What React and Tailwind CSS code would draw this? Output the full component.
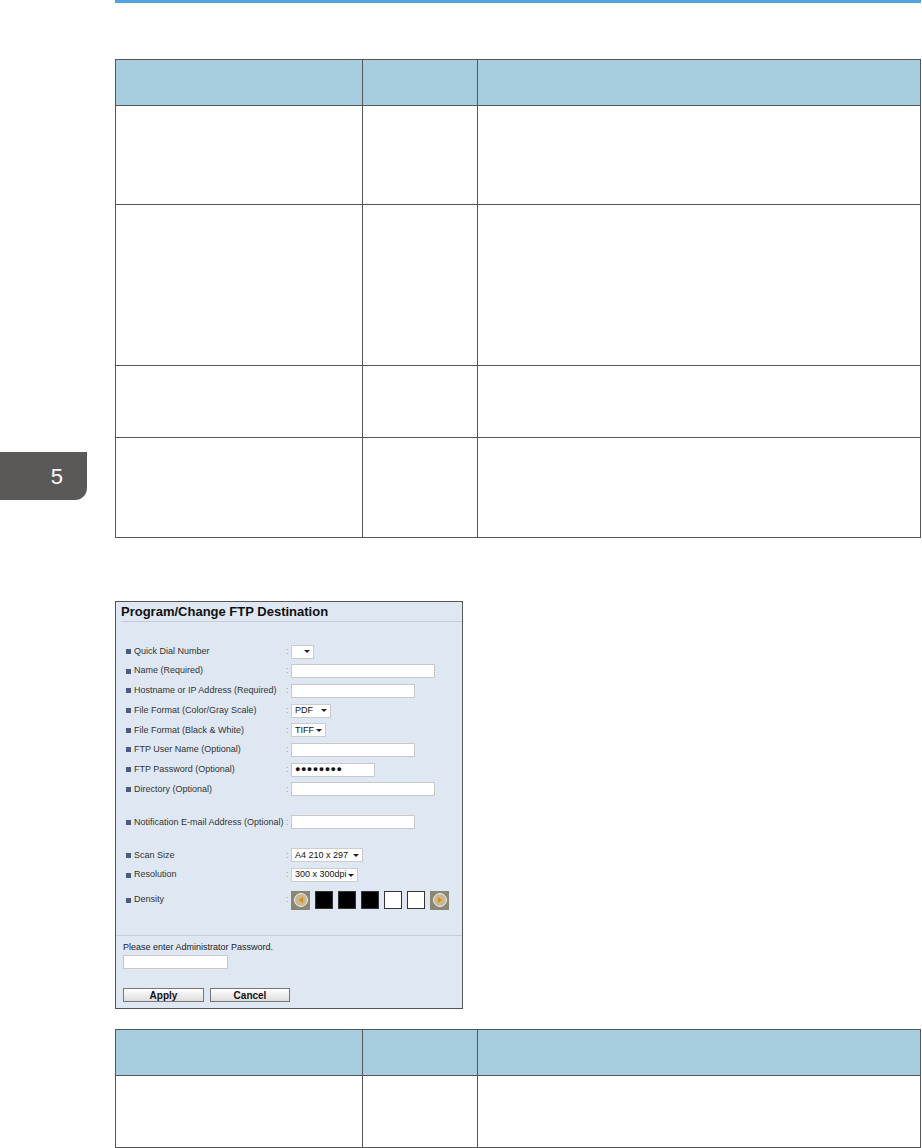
const rowsTop = [99, 161, 72, 100]

function Table({ rows }) {
  return (
    <div className="w-[806px] border border-[#555]">
      <div className="flex h-[45px] bg-[#a7cddf]">
        <div className="w-[247px] border-r border-[#555]" />
        <div className="w-[115px] border-r border-[#555]" />
        <div className="flex-1" />
      </div>
      {rows.map((h, i) => (
        <div key={i} className="flex border-t border-[#555] bg-white" style={{ height: h }}>
          <div className="w-[247px] border-r border-[#555]" />
          <div className="w-[115px] border-r border-[#555]" />
          <div className="flex-1" />
        </div>
      ))}
    </div>
  )
}

function Arrow() {
  return <span className="ml-auto mr-[3px] h-0 w-0 border-x-[3px] border-t-[3px] border-x-transparent border-t-[#222]" />
}

function Select({ w, value }) {
  return (
    <div className="flex h-[14px] items-center border border-[#ccc] bg-white pl-[3px] text-[9px] text-[#111]" style={{ width: w }}>
      {value}
      <Arrow />
    </div>
  )
}

function Input({ w, children }) {
  return (
    <div className="flex h-[14px] items-center border border-[#c8c8c8] bg-white pl-[3px]" style={{ width: w }}>
      {children}
    </div>
  )
}

function Row({ label, children, gap = 'mt-[4.7px]' }) {
  return (
    <div className={`flex h-[15px] items-center ${gap}`}>
      <div className="flex w-[160px] items-center">
        <span className="mr-[3px] h-[5px] w-[5px] bg-[#4a5a80]" />
        <span className="text-[9px] text-[#333]">{label}</span>
      </div>
      <span className="w-[5px] text-[9px] text-[#999]">:</span>
      {children}
    </div>
  )
}

function Circle({ dir }) {
  return (
    <div className="flex h-[19px] w-[19px] items-center justify-center bg-[#8a8676]">
      <div className="flex h-[14px] w-[14px] items-center justify-center rounded-full border border-[#eee] bg-[#c9b896]">
        {dir === 'l' ? (
          <span className="h-0 w-0 border-y-[3px] border-r-[4px] border-y-transparent border-r-[#d98a10]" />
        ) : (
          <span className="h-0 w-0 border-y-[3px] border-l-[4px] border-y-transparent border-l-[#d98a10]" />
        )}
      </div>
    </div>
  )
}

function Form() {
  return (
    <div className="flex h-[408px] w-[348px] flex-col border border-[#555] bg-[#dfe8f2] font-['Liberation_Sans',Arial,sans-serif]">
      <div className="ml-[5px] mt-[1px] border-b border-[#c4cdd8] pb-[1px] text-[13px] font-bold leading-[17px] text-[#111]">
        Program/Change FTP Destination
      </div>
      <div className="px-[10px] pt-[22px]">
        <Row label="Quick Dial Number" gap="">
          <Select w={23} value="" />
        </Row>
        <Row label="Name (Required)">
          <Input w={144} />
        </Row>
        <Row label="Hostname or IP Address (Required)">
          <Input w={124} />
        </Row>
        <Row label="File Format (Color/Gray Scale)">
          <Select w={40} value="PDF" />
        </Row>
        <Row label="File Format (Black & White)">
          <Select w={35} value="TIFF" />
        </Row>
        <Row label="FTP User Name (Optional)">
          <Input w={124} />
        </Row>
        <Row label="FTP Password (Optional)">
          <Input w={84}>
            <span className="text-[9px] font-bold tracking-[0.5px] text-[#111]">●●●●●●●●</span>
          </Input>
        </Row>
        <Row label="Directory (Optional)">
          <Input w={144} />
        </Row>
        <Row label="Notification E-mail Address (Optional)" gap="mt-[18px]">
          <Input w={124} />
        </Row>
        <Row label="Scan Size" gap="mt-[18px]">
          <Select w={72} value="A4 210 x 297" />
        </Row>
        <Row label="Resolution">
          <Select w={67} value="300 x 300dpi" />
        </Row>
        <div className="mt-[8px] flex h-[19px] items-center">
          <div className="flex w-[160px] items-center">
            <span className="mr-[3px] h-[5px] w-[5px] bg-[#4a5a80]" />
            <span className="text-[9px] text-[#333]">Density</span>
          </div>
          <span className="w-[5px] text-[9px] text-[#999]">:</span>
          <div className="flex items-center gap-[5px]">
            <Circle dir="l" />
            <div className="h-[18px] w-[18px] border border-[#333] bg-black" />
            <div className="h-[18px] w-[18px] border border-[#333] bg-black" />
            <div className="h-[18px] w-[18px] border border-[#333] bg-black" />
            <div className="h-[18px] w-[18px] border border-[#333] bg-white" />
            <div className="h-[18px] w-[18px] border border-[#333] bg-white" />
            <Circle dir="r" />
          </div>
        </div>
      </div>
      <div className="mt-[25px] border-t border-[#c4cdd8] px-[7px] pt-[5px]">
        <div className="text-[9px] text-[#222]">Please enter Administrator Password.</div>
        <div className="mt-[1px] h-[14px] w-[105px] border border-[#c8c8c8] bg-white" />
        <div className="mt-[19px] flex gap-[6px]">
          <div className="flex h-[14px] w-[81px] items-center justify-center border border-[#777] bg-gradient-to-b from-white to-[#ddd] text-[10px] font-bold text-[#111]">Apply</div>
          <div className="flex h-[14px] w-[80px] items-center justify-center border border-[#777] bg-gradient-to-b from-white to-[#ddd] text-[10px] font-bold text-[#111]">Cancel</div>
        </div>
      </div>
    </div>
  )
}

export default function App() {
  return (
    <div className="flex h-[1148px] w-[922px] overflow-hidden bg-white font-['Liberation_Sans',Arial,sans-serif]">
      <div className="w-[115px] shrink-0 pt-[452px]">
        <div className="flex h-[48px] w-[87px] items-center justify-end rounded-br-[12px] bg-[#5b5858] pr-[24px] text-[22px] text-white">
          5
        </div>
      </div>
      <div className="flex w-[806px] flex-col">
        <div className="h-[3px] bg-[#55a3dc]" />
        <div className="mt-[56px]">
          <Table rows={rowsTop} />
        </div>
        <div className="mt-[63px]">
          <Form />
        </div>
        <div className="mt-[20px]">
          <Table rows={[72]} />
        </div>
      </div>
    </div>
  )
}
